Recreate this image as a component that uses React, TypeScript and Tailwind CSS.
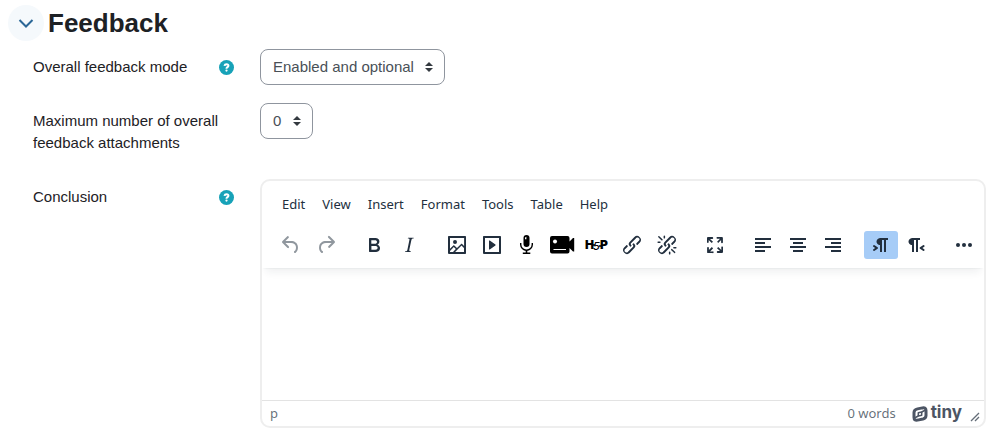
import { useState } from "react";
import type { ReactNode } from "react";

const MENUS = ["Edit", "View", "Insert", "Format", "Tools", "Table", "Help"];

const LINK_PATH =
  "M6.2 12.3a1 1 0 0 1 1.4 1.4l-2 2a2 2 0 1 0 2.6 2.8l4.8-4.8a1 1 0 0 0 0-1.4 1 1 0 1 1 1.4-1.3 2.9 2.9 0 0 1 0 4L9.6 20a3.9 3.9 0 0 1-5.5-5.5l2-2Zm11.6-.6a1 1 0 0 1-1.4-1.4l2-2a2 2 0 1 0-2.6-2.8L11 10.3a1 1 0 0 0 0 1.4A1 1 0 1 1 9.6 13a2.9 2.9 0 0 1 0-4L14.4 4a3.9 3.9 0 0 1 5.5 5.5l-2 2Z";

type Tool = { label: string; icon: ReactNode; disabled?: boolean; active?: boolean };

const TOOL_GROUPS: Tool[][] = [
  [
    {
      label: "Undo",
      disabled: true,
      icon: (
        <path d="M6.4 8H12c3.7 0 6.2 2 6.8 5.1.6 2.7-.4 5.6-2.3 6.8a1 1 0 0 1-1-1.8c1.1-.6 1.8-2.7 1.4-4.6-.5-2.1-2.1-3.5-4.9-3.5H6.4l3.3 3.3a1 1 0 1 1-1.4 1.4l-5-5a1 1 0 0 1 0-1.4l5-5a1 1 0 0 1 1.4 1.4L6.4 8Z" />
      ),
    },
    {
      label: "Redo",
      disabled: true,
      icon: (
        <path d="M17.6 10H12c-2.8 0-4.4 1.4-4.9 3.5-.4 2 .3 4 1.4 4.6a1 1 0 1 1-1 1.8c-2-1.2-2.9-4.1-2.3-6.8.6-3 3-5.1 6.8-5.1h5.6l-3.3-3.3a1 1 0 1 1 1.4-1.4l5 5a1 1 0 0 1 0 1.4l-5 5a1 1 0 0 1-1.4-1.4l3.3-3.3Z" />
      ),
    },
  ],
  [
    {
      label: "Bold",
      icon: (
        <path d="M7.8 19c-.3 0-.5 0-.6-.2l-.2-.5V5.7c0-.2 0-.4.2-.5l.6-.2h5c1.5 0 2.7.3 3.5 1 .7.6 1.1 1.4 1.1 2.5a3 3 0 0 1-.6 1.9c-.4.6-1 1-1.6 1.2.4.1.9.3 1.3.6s.8.7 1 1.2c.4.4.5 1 .5 1.6 0 1.3-.4 2.3-1.3 3-.8.7-2.1 1-3.8 1H7.8Zm5-8.3c.6 0 1.2-.1 1.6-.5.4-.3.6-.7.6-1.3 0-1.1-.8-1.7-2.3-1.7H9.3v3.5h3.4Zm.5 6c.7 0 1.3-.1 1.7-.4.4-.4.6-.9.6-1.5s-.2-1-.7-1.4c-.4-.3-1-.4-2-.4H9.4v3.8h4Z" />
      ),
    },
    {
      label: "Italic",
      icon: (
        <path d="m16.7 4.7-.1.9h-.3c-.6 0-1 0-1.4.3-.3.3-.4.6-.5 1.1l-2.1 9.8v.6c0 .5.4.8 1.4.8h.2l-.2.8H8l.2-.8h.2c1.1 0 1.8-.5 2-1.5l2-9.8.1-.5c0-.6-.4-.8-1.4-.8h-.3l.2-.9h5.8Z" />
      ),
    },
  ],
  [
    {
      label: "Image",
      icon: (
        <path
          fillRule="evenodd"
          d="m5 15.7 3.3-3.2c.3-.3.7-.3 1 0L12 15l4.1-4c.3-.4.8-.4 1 0l2 1.9V5H5v10.7ZM5 18v1h3l2.8-2.9-2-2L5 17.9Zm14-3-2.5-2.4-6.4 6.5H19v-4ZM4 3h16c.6 0 1 .4 1 1v16c0 .6-.4 1-1 1H4a1 1 0 0 1-1-1V4c0-.6.4-1 1-1Zm6 8a2 2 0 1 0 0-4 2 2 0 0 0 0 4Z"
        />
      ),
    },
    {
      label: "Multimedia",
      icon: (
        <path
          fillRule="evenodd"
          d="M4 3h16c.6 0 1 .4 1 1v16c0 .6-.4 1-1 1H4a1 1 0 0 1-1-1V4c0-.6.4-1 1-1Zm1 2v14h14V5H5Zm4.8 2.6 5.6 4a.5.5 0 0 1 0 .8l-5.6 4A.5.5 0 0 1 9 16V8a.5.5 0 0 1 .8-.4Z"
        />
      ),
    },
    {
      label: "Record audio",
      icon: (
        <g fill="#000">
          <rect x="8.5" y="2" width="6" height="12" rx="3" />
          <path d="M5.7 10v1.500a5.800 5.800 0 0 0 11.600 0V10" fill="none" stroke="#000" strokeWidth="1.4" />
          <path d="M10.700 17h1.600v2.400h3v1.600H7.800v-1.600h2.900Z" />
          <path d="M10 5.600c0-1 .5-1.700 1.400-1.800v2.400H10Z" fill="#fff" />
        </g>
      ),
    },
    {
      label: "Record video",
      icon: (
        <g fill="#000">
          <path d="M2 3h15.500a2 2 0 0 1 2 2v3.500L23 5h1.200v13.500H23L19.500 15v3.500a2 2 0 0 1-2 2H2a2 2 0 0 1-2-2V5a2 2 0 0 1 2-2Z" />
          <circle cx="5" cy="8.500" r="2" fill="#fff" />
          <path d="M3.500 16.500H16" stroke="#fff" strokeWidth="1.2" />
        </g>
      ),
    },
    {
      label: "Configure H5P content",
      icon: (
        <g fill="#000" fontFamily="Inter, 'Liberation Sans', sans-serif">
          <text x="0" y="16" fontSize="12" fontWeight="900">H</text>
          <text x="15" y="16" fontSize="12" fontWeight="900">P</text>
          <text x="8" y="17" fontSize="11" fontWeight="500" fontStyle="italic">5</text>
          <path d="M7 12h3M14 13h3" stroke="#000" strokeWidth="1.5" />
        </g>
      ),
    },
    { label: "Link", icon: <path d={LINK_PATH} /> },
    {
      label: "Unlink",
      icon: (
        <>
          <path d={LINK_PATH} />
          <path d="M7.6 6.3a.8.8 0 0 1-1 1.1L3.3 4.2a.7.7 0 1 1 1-1l3.2 3.1ZM5.1 8.6a.8.8 0 0 1 0 1.5H3a.8.8 0 0 1 0-1.5H5Zm5-3.5a.8.8 0 0 1-1.5 0V3a.8.8 0 0 1 1.5 0V5Zm6 11.8a.8.8 0 0 1 1-1l3.2 3.2a.8.8 0 0 1-1 1L16 17Zm-2.2 2a.8.8 0 0 1 1.5 0V21a.8.8 0 0 1-1.5 0V19Zm5-3.5a.7.7 0 1 1 0-1.5H21a.8.8 0 0 1 0 1.5H19Z" />
        </>
      ),
    },
  ],
  [
    {
      label: "Fullscreen",
      icon: (
        <path d="m15.3 10-1.2-1.3 2.9-3h-2.3a.9.9 0 1 1 0-1.7H19c.5 0 .9.4.9.9v4.4a.9.9 0 1 1-1.8 0V7l-2.9 3Zm0 4 3 3v-2.3a.9.9 0 1 1 1.7 0V19c0 .5-.4.9-.9.9h-4.4a.9.9 0 1 1 0-1.8H17l-3-2.9 1.3-1.2ZM10 15.4l-2.9 3h2.3a.9.9 0 1 1 0 1.7H5a.9.9 0 0 1-.9-.9v-4.4a.9.9 0 1 1 1.8 0V17l2.9-3 1.2 1.3ZM8.7 10 5.7 7v2.3a.9.9 0 0 1-1.7 0V5c0-.5.4-.9.9-.9h4.4a.9.9 0 0 1 0 1.8H7l3 2.9-1.3 1.2Z" />
      ),
    },
  ],
  [
    { label: "Align left", icon: <path d="M4 5h16v2H4zM4 9h10v2H4zM4 13h16v2H4zM4 17h10v2H4z" /> },
    { label: "Align center", icon: <path d="M4 5h16v2H4zM7 9h10v2H7zM4 13h16v2H4zM7 17h10v2H7z" /> },
    { label: "Align right", icon: <path d="M4 5h16v2H4zM10 9h10v2H10zM4 13h16v2H4zM10 17h10v2H10z" /> },
  ],
  [
    {
      label: "Left to right",
      active: true,
      icon: (
        <path d="M11 5h8v2h-2v12h-2V7h-2v12h-2v-7c-.5 0-1 0-1.4-.3A3.4 3.4 0 0 1 7.8 10a3.3 3.3 0 0 1 0-2.8 3.4 3.4 0 0 1 1.8-1.8L11 5ZM4.400 16.200 6.200 15l-1.800-1.200a1 1 0 0 1 1.200-1.600l3 2a1 1 0 0 1 0 1.600l-3 2a1 1 0 1 1-1.200-1.600Z" />
      ),
    },
    {
      label: "Right to left",
      icon: (
        <path d="M8 5h8v2h-2v12h-2V7h-2v12H8v-7c-.5 0-1 0-1.4-.3A3.4 3.4 0 0 1 4.8 10a3.3 3.3 0 0 1 0-2.8 3.4 3.4 0 0 1 1.8-1.8L8 5Zm12.2 11.2a1 1 0 1 1-1.2 1.6l-3-2a1 1 0 0 1 0-1.6l3-2a1 1 0 1 1 1.2 1.6L18.4 15l1.8 1.2Z" />
      ),
    },
  ],
  [
    {
      label: "Reveal or hide additional toolbar items",
      icon: (
        <>
          <circle cx="6" cy="12" r="2" />
          <circle cx="12" cy="12" r="2" />
          <circle cx="18" cy="12" r="2" />
        </>
      ),
    },
  ],
];

function HelpButton({ topic }: { topic: string }) {
  return (
    <button type="button" aria-label={`Help with ${topic}`} className="flex h-[22px] shrink-0 items-center">
      <svg viewBox="0 0 512 512" className="h-[15px] w-[15px] fill-[#17a2b8]">
        <circle cx="256" cy="256" r="256" />
        <path
          fill="none"
          stroke="#fff"
          strokeWidth="68"
          d="M186 200c8-38 34-56 70-56 40 0 66 20 66 52 0 46-66 44-66 92v10"
        />
        <circle cx="256" cy="360" r="38" fill="#fff" />
      </svg>
    </button>
  );
}

function FormRow({ id, label, help, children }: { id: string; label: string; help?: boolean; children: ReactNode }) {
  return (
    <div className="flex items-start gap-[26px]">
      <div className="flex w-[201px] shrink-0 justify-between py-[7px]">
        <label htmlFor={id} className="leading-[22px]">
          {label}
        </label>
        {help && <HelpButton topic={label} />}
      </div>
      <div className="min-w-0 flex-1">{children}</div>
    </div>
  );
}

function Select({ id, options }: { id: string; options: string[] }) {
  return (
    <div className="relative inline-flex align-top">
      <select
        id={id}
        className="h-9 appearance-none rounded-lg border border-[#8f959e] bg-white pr-[30px] pl-3 text-[15px] text-[#495057]"
      >
        {options.map((o) => (
          <option key={o}>{o}</option>
        ))}
      </select>
      <svg
        viewBox="0 0 4 5"
        className="pointer-events-none absolute top-1/2 right-3 h-[10px] w-2 -translate-y-1/2 fill-[#343a40]"
      >
        <path d="M2 0 0 2h4zm0 5L0 3h4z" />
      </svg>
    </div>
  );
}

function TinyLogo() {
  return (
    <a href="#tiny" className="flex items-center gap-[3px] text-[#4c5564]">
      <svg viewBox="0 0 16 16" className="h-4 w-4" fill="none" stroke="currentColor" strokeLinejoin="round">
        <path
          d="M5.500 2.900 10.500 1.900Q14 1.400 14 4.500V9.500Q14 12.300 11 13L5.500 14.100Q2 14.600 2 11.500V6.500Q2 3.700 5.500 2.900Z"
          strokeWidth="3"
        />
        <path d="M6.300 6.700 9.700 6V9.300L6.300 10Z" strokeWidth="1.500" />
        <path d="M2.500 12 6.300 10M9.700 6 13.500 4" strokeWidth="1.500" />
      </svg>
      <span className="pb-1 font-['Inter',sans-serif] text-[17px] leading-5 font-bold">tiny</span>
    </a>
  );
}

function Editor({ id }: { id: string }) {
  const [text, setText] = useState("");
  const words = text.split(/\s+/).filter(Boolean).length;

  return (
    <div className="overflow-hidden rounded-[10px] border-2 border-[#eee] font-['Noto_Sans','Open_Sans',sans-serif] text-[#222f3e]">
      <div className="relative pt-[10px] pb-[9px] shadow-[0_2px_2px_-2px_rgba(34,47,62,0.1),0_8px_8px_-4px_rgba(34,47,62,0.07)]">
        <div role="menubar" className="flex gap-[9px] px-4">
          {MENUS.map((m) => (
            <button key={m} type="button" role="menuitem" className="h-7 px-1 text-[13px]">
              {m}
            </button>
          ))}
        </div>
        <div role="toolbar" className="mt-3 flex gap-[14px] px-3">
          {TOOL_GROUPS.map((group) => (
            <div key={group[0].label} className="flex gap-px">
              {group.map((t) => (
                <button
                  key={t.label}
                  type="button"
                  title={t.label}
                  disabled={t.disabled}
                  className={`flex h-7 w-[34px] items-center justify-center rounded-[3px] ${t.active ? "bg-[#a6ccf7]" : ""}`}
                >
                  <svg
                    viewBox="0 0 24 24"
                    className={`h-6 w-6 overflow-visible ${t.disabled ? "fill-[#222f3e]/50" : "fill-[#222f3e]"}`}
                  >
                    {t.icon}
                  </svg>
                </button>
              ))}
            </div>
          ))}
        </div>
      </div>
      <textarea
        id={id}
        value={text}
        onChange={(e) => setText(e.target.value)}
        className="block h-[132px] w-full resize-none p-4 text-[15px] outline-none"
      />
      <div className="flex h-[26px] items-center border-t border-[#e3e3e3] pr-1 pl-2 text-[13px] text-[#222f3e]/70">
        <span className="flex-1">p</span>
        <button type="button" className="mr-4">
          {words} words
        </button>
        <TinyLogo />
        <svg viewBox="0 0 10 10" className="mb-1 ml-2 h-[10px] w-[10px] self-end stroke-current" fill="none">
          <path d="M1 9 9 1M5 9l4-4" strokeWidth="1.3" />
        </svg>
      </div>
    </div>
  );
}

export default function App() {
  const [open, setOpen] = useState(true);

  return (
    <section className="bg-white pt-[5px] pr-[18px] pb-3 pl-2 font-['Liberation_Sans',Arial,sans-serif] text-[15px] text-[#1d2125]">
      <div className="flex items-center gap-1">
        <button
          type="button"
          aria-label="Toggle Feedback section"
          aria-expanded={open}
          onClick={() => setOpen(!open)}
          className="flex h-9 w-9 items-center justify-center rounded-full bg-[#f5f9fc]"
        >
          <svg viewBox="0 0 16 16" className="h-4 w-4" fill="none" stroke="#2b6797" strokeWidth="2">
            <path d="m1.500 5 6.500 6.500L14.500 5" />
          </svg>
        </button>
        <h3 className="text-[26px] leading-9 font-bold">Feedback</h3>
      </div>

      {open && (
        <form className="mt-2 flex flex-col gap-[18px] pl-[25px]">
          <FormRow id="feedback-mode" label="Overall feedback mode" help>
            <Select id="feedback-mode" options={["Enabled and optional"]} />
          </FormRow>
          <FormRow id="max-attachments" label="Maximum number of overall feedback attachments">
            <Select id="max-attachments" options={["0", "1", "2", "3"]} />
          </FormRow>
          <FormRow id="conclusion" label="Conclusion" help>
            <Editor id="conclusion" />
          </FormRow>
        </form>
      )}
    </section>
  );
}
